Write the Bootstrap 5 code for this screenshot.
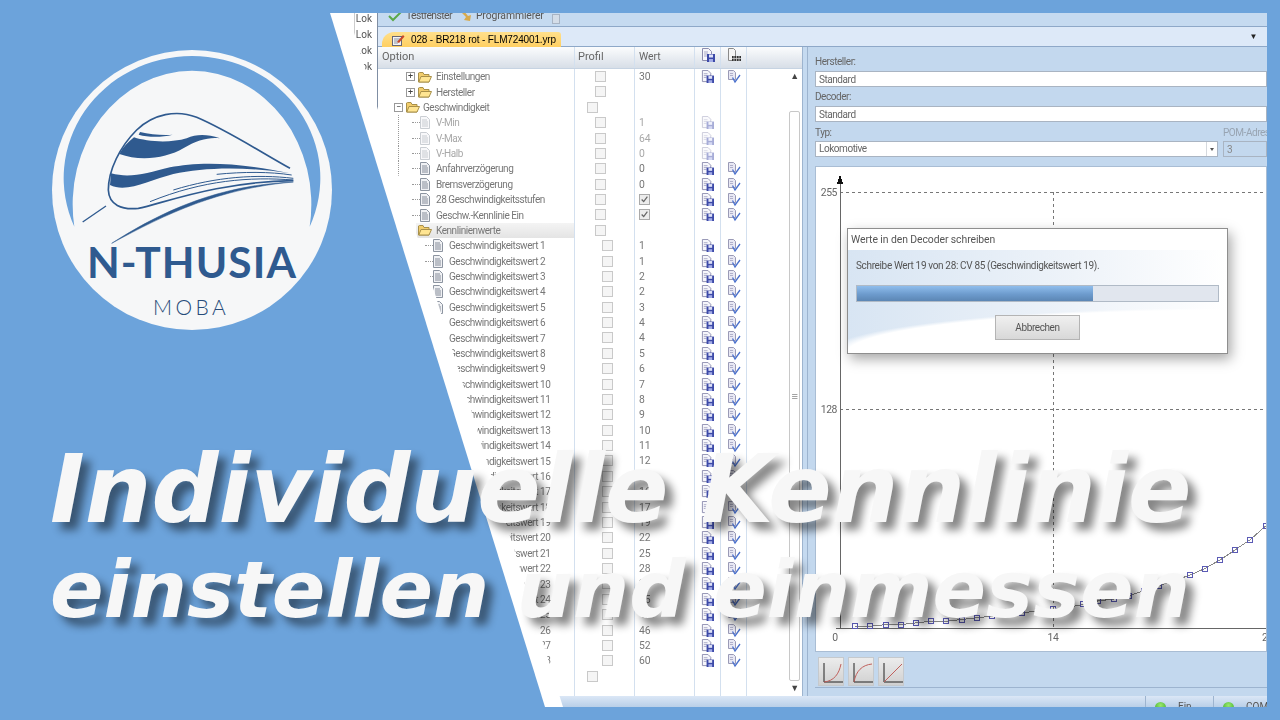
<!DOCTYPE html>
<html lang="de">
<head>
  <meta charset="UTF-8">
  <title>Individuelle Kennlinie einstellen und einmessen</title>
  <link href="https://cdn.jsdelivr.net/npm/bootstrap@5.3.0/dist/css/bootstrap.min.css" rel="stylesheet">
  <style>
    html, body { height: 100%; }
    body { background: #6ca3db; overflow: hidden; font-family: "Roboto", "Liberation Sans", sans-serif; }

    /* the thumbnail is a free canvas: shot, logo and title are laid over each other */
    .shot {
      left: 330px; top: 13px; width: 937px; height: 694px;
      clip-path: polygon(0 0, 100% 0, 100% 100%, 215px 100%);
      background: #fff; color: #777; font-size: 10px; line-height: 15px; letter-spacing: -.45px;
      filter: blur(.35px); overflow: hidden;
    }
    /* white band beside the blue wedge, it hides the start of the tree rows */
    .shot-fade { inset: 0; background: #fff; clip-path: polygon(0 0, 18px 0, 233px 100%, 0 100%); }
    .logo { left: 30px; top: 30px; width: 320px; height: 320px; }
    .logo-main { font: 700 42.5px "Lato", sans-serif; fill: #2f5a8f; letter-spacing: 1.1px; }
    .logo-sub { font: 300 21px "Lato", sans-serif; fill: #274b78; letter-spacing: 3.4px; }
    .headline {
      left: 50px; top: 440px; color: #f7f7f7; white-space: nowrap; font-family: "DejaVu Sans", sans-serif;
      font-style: italic; font-weight: 700;
      text-shadow: 8px 8px 8px rgba(0, 0, 0, .48);
    }
    .headline-a { font-size: 93.6px; line-height: 100px; height: 100px; }
    .headline-b { font-size: 79px; line-height: 100px; height: 100px; }

    .lok-col { width: 48px; border-right: 1px solid #7f8ea3; text-align: right; padding-right: 5px; color: #555; letter-spacing: 0; }
    .lok-col div { height: 16px; line-height: 12px; border-left: 1px solid #ccc; margin-left: 24px; }

    .tool-bar { height: 14px; background: #c5daf0; border-bottom: 1px solid #8ea8c8; color: #555; padding-left: 10px; font-size: 10.4px; letter-spacing: -.12px; }
    .tool-bar > div { margin-top: -8px; }
    .tool-tight { letter-spacing: -.6px; }
    .tool-more { width: 8px; height: 10px; background: #d4dde8; border: 1px solid #a8b4c4; margin-top: 1px !important; }
    .tab-strip { height: 20px; background: #dde9f8; border-bottom: 1px solid #8ea8c8; padding-left: 4px; }
    .tab-strip .nav-link {
      height: 15px; margin: 5px 0 0; padding: 0 5px 0 10px; border: 0; border-radius: 12px 3px 0 0; gap: 6px;
      background: linear-gradient(#ffe08c, #ffcf62); color: #333; font: 10px/15px "Liberation Sans", sans-serif; letter-spacing: -.15px;
    }
    .tab-menu { margin: 5px 10px 0 auto; font-size: 8px; color: #222; line-height: 10px; }

    .grid-head { height: 22px; background: linear-gradient(#fbfcfd, #d7dee7); border-bottom: 1px solid #c6d3e2; color: #666; line-height: 20px; font-size: 11px; letter-spacing: 0; }
    .cell-name { width: 197px; flex: none; border-right: 1px solid #d3e0ef; padding-left: 4px; }
    .cell-prof { width: 60px; flex: none; border-right: 1px solid #d3e0ef; padding-left: 3px; }
    .cell-val { width: 60px; flex: none; border-right: 1px solid #d3e0ef; padding-left: 4px; font-size: 10.4px; letter-spacing: 0; }
    .cell-ic { width: 26px; flex: none; border-right: 1px solid #d3e0ef; padding-left: 6px; }
    .cell-ic svg { display: block; margin-top: 1px; }
    .grid-row { height: 15.38px; }
    .grid-row > div { height: 15.38px; line-height: 15px; }
    .grid-row .cell-name { display: flex; align-items: center; white-space: nowrap; padding-left: 0; }
    .dim { color: #a8a8a8; }
    .dim svg { opacity: .45; }
    .tree-line { background: repeating-linear-gradient(#999 0 1px, transparent 1px 2px) no-repeat 20px 0 / 1px 100%; }
    .hilite { background: linear-gradient(#f4f4f4, #e4e4e4); height: 15px; padding-left: 2px; margin-left: 38px; width: 158px; display: flex; align-items: center; }
    .stub { width: 8px; border-top: 1px dotted #999; flex: none; }
    .exp { width: 9px; height: 9px; border: 1px solid #999; background: #fff; color: #444; font-size: 9px; line-height: 6px; text-align: center; flex: none; letter-spacing: 0; }
    .cb.form-check-input {
      display: block; width: 11px; height: 11px; margin: 2px 0 0; border: 1px solid #c9c9c9; border-radius: 0;
      background-color: #f5f5f5; opacity: 1; float: none;
    }
    .cb.form-check-input:checked {
      background-color: #ececec; border-color: #aaa;
      background-image: url("data:image/svg+xml,%3Csvg xmlns='http://www.w3.org/2000/svg' viewBox='0 0 11 11'%3E%3Cpath d='M2 5.500 4.500 8 9 2' fill='none' stroke='%23666' stroke-width='1.500'/%3E%3C/svg%3E");
      background-size: 100%;
    }
    .scroll-col { width: 15px; flex: none; padding: 0 2px; position: relative; }
    .scroll-arrow { height: 15px; font-size: 9px; line-height: 15px; text-align: center; color: #444; }
    .scroll-thumb { margin-top: 27px; height: 570px; border: 1px solid #c8c8c8; border-radius: 2px; color: #888; font-size: 11px; }
    .split-bar { width: 6px; flex: none; background: #c5daf0; border-left: 1px solid #9db4cf; border-right: 1px solid #9db4cf; }

    .panel-right { background: #c3d8ee; padding: 9px 0 0 7px; height: 649px; color: #666; }
    .fld-label { height: 12px; line-height: 12px; margin: 0 0 3px; display: block; white-space: nowrap; }
    .fld-box.form-control, .fld-box.form-select {
      height: 16px; min-height: 0; padding: 0 3px; border: 1px solid #a9b4c2; border-radius: 0;
      font-size: 10px; line-height: 14px; letter-spacing: inherit; color: #666; background-color: #fff;
    }
    .fld-box.form-select {
      background-position: right 0 center; background-size: 11px 14px;
      background-image: url("data:image/svg+xml,%3Csvg xmlns='http://www.w3.org/2000/svg' viewBox='0 0 11 14'%3E%3Cpath d='M.5 0v14' stroke='%23d5d9de'/%3E%3Cpath d='M4 6h4L6 9z' fill='%23555'/%3E%3C/svg%3E");
    }
    .typ-row { margin-top: 5px; gap: 5px; }
    .typ-label { margin-bottom: 2px; }
    .pom-col { width: 44px; flex: none; }
    .pom-box.form-control { background: #c3d8ee; color: #888; }
    .pom-label { color: #98a4b2; }
    .chart-box { height: 486px; background: #fff; border: 1px solid #a9bdd4; position: relative; margin-top: 9px; overflow: hidden; }
    .chart-box svg { display: block; }
    .chart-txt { font: 10.4px "Roboto", sans-serif; fill: #666; }
    .btn-bar { height: 36px; border-bottom: 1px solid #9db4cf; padding: 5px 0 0 3px; }
    .crv-btn { width: 26px; height: 29px; padding: 0; border: 1px solid #c5c9cd; border-radius: 0; background: linear-gradient(#ececec, #d0d0d0); }
    .crv-btn svg { display: block; margin: 3px 0 0 1px; }

    .dlg { left: 31px; top: 61px; width: 381px; height: 126px; background: #fff; border: 1px solid #8e8e8e; box-shadow: 3px 5px 12px rgba(0, 0, 0, .35); color: #555; letter-spacing: -.35px; }
    .dlg-title { height: 21px; line-height: 21px; padding-left: 3px; font-size: 10.4px; letter-spacing: -.08px; }
    .dlg-body {
      height: 103px; padding: 8px 8px 0;
      background: radial-gradient(ellipse 400px 45px at 100% 100%, #fff 95%, transparent 100%), linear-gradient(to right, #d8e5f3, #eef3f9 60%, #fff);
    }
    .dlg-bar.progress { height: 17px; margin: 12px 0 13px; border-radius: 0; background: #e1e6ee; border: 1px solid #b0bac6; }
    .dlg-bar .progress-bar { background: linear-gradient(#8fbdec, #6d9bcd 55%, #5c86b4); }
    .dlg-btn.btn { display: block; width: 85px; height: 25px; margin: 0 auto; padding: 0; border: 1px solid #b4b4b4; border-radius: 0; background: linear-gradient(#f0f0f0, #d8d8d8); font-size: 10px; letter-spacing: -.4px; color: #555; }

    .status-bar { height: 11px; background: linear-gradient(#dbe7f6, #b9cfe8); color: #555; line-height: 22px; overflow: hidden; letter-spacing: 0; }
    .status-wrap { margin-right: -14px; }
    .led { width: 11px; height: 11px; border-radius: 50%; background: radial-gradient(circle at 50% 30%, #9be86f, #27a31b); margin-top: 6px; }
    .status-item { border-left: 1px solid #9db4cf; height: 11px; padding-left: 9px; gap: 12px; width: 68px; }
  </style>
</head>
<body>
  <svg width="0" height="0" class="position-absolute">
    <symbol id="ic-save" viewBox="0 0 14 14">
      <path d="M1.500 .5h6l3 3v9h-9z" fill="#f6f6fb" stroke="#8d8dae"/>
      <path d="M3 4h4M3 6h4M3 8h3" stroke="#a9a9c6"/>
      <rect x="6" y="6" width="8" height="8" fill="#3d4aa8"/>
      <rect x="8" y="6.500" width="4" height="3" fill="#dfe2f7"/>
      <rect x="8" y="11" width="4" height="3" fill="#a3acE6"/>
    </symbol>
    <symbol id="ic-check" viewBox="0 0 14 14">
      <path d="M1.500 .5h5l2 2v7h-7z" fill="#e8e8f4" stroke="#9a9ab6"/>
      <path d="M3 3.500h3M3 5.500h3" stroke="#b0b0ca"/>
      <path d="M5.500 7.500 8 12 13 5" fill="none" stroke="#4a70cc" stroke-width="1.300"/>
    </symbol>
    <symbol id="ic-grid" viewBox="0 0 14 14">
      <path d="M1.500 .5h5l2 2v10h-7z" fill="#f4f4f4" stroke="#8a8a8a"/>
      <path d="M5 8h9v5H5z" fill="#333"/>
      <path d="M7 8v5M9.500 8v5M12 8v5M5 10.500h9" stroke="#ddd" stroke-width=".7"/>
    </symbol>
    <symbol id="ic-doc" viewBox="0 0 10 13">
      <path d="M.5 .5h6l3 3v9h-9z" fill="#f0f1f4" stroke="#8c94a0"/>
      <path d="M2 4h5M2 6h6M2 8h6M2 10h6" stroke="#858c99"/>
    </symbol>
    <symbol id="ic-folder" viewBox="0 0 14 12">
      <path d="M.5 2V11h10.500V3.500H6L5 1.500H1.500z" fill="#f2cd6c" stroke="#a8904a"/>
      <path d="M.8 11 3 5.500h10.500L11 11z" fill="#ffe592" stroke="#a8904a"/>
    </symbol>
  </svg>

  <!-- window screenshot, cut diagonally on the left -->
  <div class="shot position-absolute d-flex flex-column">
    <div class="d-flex flex-fill overflow-hidden">
      <div class="lok-col flex-shrink-0">
        <div>Lok</div><div>Lok</div><div>Lok</div><div>Lok</div>
      </div>
      <div class="d-flex flex-column flex-fill overflow-hidden">
        <div class="tool-bar d-flex flex-shrink-0">
          <div class="d-flex align-items-center tool-tight">
            <svg width="14" height="12" viewBox="0 0 14 12" class="me-1"><path d="M1 6 5 10 13 2" fill="none" stroke="#5aa84a" stroke-width="2"/></svg>Testfenster
          </div>
          <div class="d-flex align-items-center ms-2">
            <svg width="12" height="12" viewBox="0 0 12 12" class="me-1"><path d="M1 2 6 7 4 10 10 11 11 5 8 6 4 1z" fill="#d8aa4c"/></svg>Programmierer
          </div>
          <div class="tool-more ms-2"></div>
        </div>
        <div class="tab-strip d-flex flex-shrink-0">
          <ul class="nav nav-tabs border-0">
            <li class="nav-item">
              <a class="nav-link active d-flex align-items-center" href="#">
                <svg width="13" height="12" viewBox="0 0 13 12"><rect x=".5" y="2.500" width="9" height="9" fill="#f4f4f4" stroke="#667"/><path d="M2 5h6M2 7h6M2 9h4" stroke="#8a93a3"/><path d="M5 8 11 1l1.500 1.500L7 9z" fill="#c9482c"/></svg>028 - BR218 rot - FLM724001.yrp
              </a>
            </li>
          </ul>
          <div class="tab-menu">&#9660;</div>
        </div>
        <div class="d-flex flex-fill overflow-hidden">
          <div class="d-flex flex-column flex-shrink-0" style="width:424px">
            <div class="grid-head d-flex flex-shrink-0">
              <div class="cell-name">Option</div>
              <div class="cell-prof">Profil</div>
              <div class="cell-val">Wert</div>
              <div class="cell-ic"><svg width="14" height="14"><use href="#ic-save"/></svg></div>
              <div class="cell-ic"><svg width="14" height="14"><use href="#ic-grid"/></svg></div>
            </div>
            <div class="d-flex flex-fill overflow-hidden">
              <div class="flex-fill d-flex flex-column" id="gridRows"></div>
              <div class="scroll-col">
                <div class="scroll-arrow">&#9650;</div>
                <div class="scroll-thumb d-flex align-items-center justify-content-center">&#8801;</div>
                <div class="scroll-arrow">&#9660;</div>
              </div>
            </div>
          </div>
          <div class="split-bar"></div>
          <div class="panel-right flex-fill overflow-hidden">
            <label class="fld-label">Hersteller:</label>
            <input class="form-control fld-box" value="Standard">
            <label class="fld-label mt-1">Decoder:</label>
            <input class="form-control fld-box" value="Standard">
            <div class="d-flex typ-row">
              <div class="flex-fill">
                <label class="fld-label typ-label">Typ:</label>
                <select class="form-select fld-box"><option>Lokomotive</option></select>
              </div>
              <div class="pom-col">
                <label class="fld-label typ-label pom-label">POM-Adresse:</label>
                <input class="form-control fld-box pom-box" value="3" disabled>
              </div>
            </div>
            <div class="chart-box">
              <svg width="452" height="486" id="chartSvg" shape-rendering="crispEdges"></svg>
              <div class="dlg position-absolute">
                <div class="dlg-title">Werte in den Decoder schreiben</div>
                <div class="dlg-body">
                  <div>Schreibe Wert 19 von 28: CV 85 (Geschwindigkeitswert 19).</div>
                  <div class="progress dlg-bar"><div class="progress-bar" style="width:65.400%"></div></div>
                  <button class="btn dlg-btn">Abbrechen</button>
                </div>
              </div>
            </div>
            <div class="btn-bar d-flex gap-1">
              <button class="btn crv-btn"><svg width="24" height="23" viewBox="0 0 24 23"><path d="M4 1v19h19" fill="none" stroke="#222"/><path d="M4 20C14 19 19 12 21 2" fill="none" stroke="#c0605c"/></svg></button>
              <button class="btn crv-btn"><svg width="24" height="23" viewBox="0 0 24 23"><path d="M4 1v19h19" fill="none" stroke="#222"/><path d="M4 20C6 9 12 3 22 2" fill="none" stroke="#c0605c"/></svg></button>
              <button class="btn crv-btn"><svg width="24" height="23" viewBox="0 0 24 23"><path d="M4 1v19h19" fill="none" stroke="#222"/><path d="M4 20 22 2" fill="none" stroke="#c0605c"/></svg></button>
            </div>
          </div>
        </div>
      </div>
    </div>
    <div class="status-bar d-flex justify-content-end flex-shrink-0">
      <div class="status-wrap d-flex">
        <div class="status-item d-flex"><span class="led"></span><span>Ein</span></div>
        <div class="status-item d-flex"><span class="led"></span><span>COM</span></div>
      </div>
    </div>
    <div class="shot-fade position-absolute"></div>
  </div>

  <!-- logo -->
  <svg class="logo position-absolute" viewBox="0 0 960 960">
    <circle cx="486" cy="480" r="420" fill="#f6f7f8"/>
    <path d="M133 590A385 366 0 1 1 839 590 358 401 0 1 0 133 590Z" fill="#6ca3db"/>
    <path d="M780 415C690 365 590 300 500 262 440 238 370 252 320 300 270 350 235 420 235 480 237 525 275 540 325 535 400 520 560 455 790 452" fill="none" stroke="#2f5a8f" stroke-width="5"/>
    <path d="M312 322C350 335 420 340 470 325 500 312 530 312 570 325 540 320 500 330 460 355 410 385 330 395 268 372 280 350 295 335 312 322Z" fill="#2f5a8f"/>
    <path d="M330 306C360 312 400 318 428 314 395 322 355 322 326 314Z" fill="#2f5a8f"/>
    <path d="M243 430C300 445 350 430 420 412 500 395 620 395 780 430 640 408 520 412 430 432 360 450 290 490 240 465Z" fill="#2f5a8f"/>
    <path d="M560 433C640 425 720 425 785 435M430 480C560 440 680 432 790 445M360 515C520 450 660 440 790 450" fill="none" stroke="#2f5a8f" stroke-width="3"/>
    <path d="M245 640C400 540 570 465 790 456 570 475 410 550 245 640Z" fill="#2f5a8f" stroke="#2f5a8f" stroke-width="1.500"/>
    <path d="M158 576 228 528" stroke="#2f5a8f" stroke-width="4"/>
    <text class="logo-main" transform="scale(3)" x="57" y="248">N-THUSIA</text>
    <text class="logo-sub" transform="scale(3)" x="123" y="285">MOBA</text>
  </svg>

  <div class="headline position-absolute">
    <div class="headline-a">Individuelle Kennlinie</div>
    <div class="headline-b">einstellen und einmessen</div>
  </div>

  <script>
    // tree rows: kind, text, value, profil checkbox offset
    var rows = [
      ["fold", "Einstellungen", "30", 20], ["fold", "Hersteller", "", 20],
      ["open", "Geschwindigkeit", "", 12],
      ["doc2", "V-Min", "1", 20, "dim"], ["doc2", "V-Max", "64", 20, "dim"], ["doc2", "V-Halb", "0", 20, "dim"],
      ["doc2", "Anfahrverzögerung", "0", 20], ["doc2", "Bremsverzögerung", "0", 20],
      ["doc2", "28 Geschwindigkeitsstufen", "x", 20], ["doc2", "Geschw.-Kennlinie Ein", "x", 20],
      ["high", "Kennlinienwerte", "", 20]
    ];
    var cvs = [1,1,2,2,3,4,4,5,6,7,8,9,10,11,12,14,16,17,19,22,25,28,31,35,40,46,52,60];
    cvs.forEach(function (v, i) {
      rows.push(["doc3", "Geschwindigkeitswert " + (i + 1), String(v), 27]);
    });
    rows.push(["none", "", "", 12]);

    function use(id, w, h) {
      return '<svg width="' + w + '" height="' + h + '" class="flex-shrink-0"><use href="#' + id + '"/></svg>';
    }

    var html = "";
    rows.forEach(function (r, i) {
      var kind = r[0], name = "";
      var lined = i >= 3 && i <= 6 ? " tree-line" : "";
      if (kind == "fold") name = '<span class="exp" style="margin-left:28px;margin-right:3px">+</span>' + use("ic-folder", 14, 12) + '<span class="ms-1">' + r[1] + '</span>';
      if (kind == "open") name = '<span class="exp" style="margin-left:16px;margin-right:3px">&minus;</span>' + use("ic-folder", 14, 12) + '<span style="margin-left:3px">' + r[1] + '</span>';
      if (kind == "doc2") name = '<span class="stub" style="margin-left:34px"></span>' + use("ic-doc", 10, 13) + '<span style="margin-left:6px">' + r[1] + '</span>';
      if (kind == "doc3") name = '<span class="stub" style="margin-left:47px"></span>' + use("ic-doc", 10, 13) + '<span style="margin-left:6px">' + r[1] + '</span>';
      if (kind == "high") name = '<div class="hilite">' + use("ic-folder", 14, 12) + '<span class="ms-1">' + r[1] + '</span></div>';

      var val = r[2] == "x" ? '<input type="checkbox" class="form-check-input cb" checked disabled>' : r[2];
      var hasIcons = r[2] != "";
      html += '<div class="grid-row d-flex flex-shrink-0 ' + (r[4] || "") + '">' +
        '<div class="cell-name' + lined + '">' + name + '</div>' +
        '<div class="cell-prof"><input type="checkbox" class="form-check-input cb" disabled style="margin-left:' + (r[3] - 3) + 'px"></div>' +
        '<div class="cell-val">' + val + '</div>' +
        '<div class="cell-ic">' + (hasIcons ? use("ic-save", 13, 13) : "") + '</div>' +
        '<div class="cell-ic">' + (hasIcons && r[4] != "dim" ? use("ic-check", 14, 14) : "") + '</div>' +
        '</div>';
    });
    // empty rest of the grid, keeps the column lines going
    html += '<div class="d-flex flex-fill"><div class="cell-name"></div><div class="cell-prof"></div><div class="cell-val"></div><div class="cell-ic"></div><div class="cell-ic"></div></div>';
    document.getElementById("gridRows").innerHTML = html;

    // chart, in page coordinates shifted to the box
    var line = "", dots = "";
    cvs.forEach(function (v, i) {
      var x = 840 + (i + 1) * 15.2, y = 628 - v * 1.7;
      line += (i ? "L" : "M") + x.toFixed(1) + " " + y.toFixed(1);
      dots += '<rect x="' + (x - 2.5).toFixed(1) + '" y="' + (y - 2.5).toFixed(1) + '" width="5" height="5" fill="none" stroke="#5b5bb5"/>';
    });
    document.getElementById("chartSvg").innerHTML =
      '<g transform="translate(-816 -167)">' +
      '<path d="M840 192.500H1270M840 409.500H1270M1053.500 192V628M1266.500 192V628" stroke="#777" stroke-dasharray="3 3" fill="none"/>' +
      '<path d="M840.500 180V628M836 628.500H1270" stroke="#666" fill="none"/>' +
      '<path d="M840 174 837 184H843Z" fill="#111"/>' +
      '<text class="chart-txt" x="837" y="196" text-anchor="end">255</text>' +
      '<text class="chart-txt" x="837" y="413" text-anchor="end">128</text>' +
      '<text class="chart-txt" x="835" y="641" text-anchor="middle">0</text>' +
      '<text class="chart-txt" x="1053" y="641" text-anchor="middle">14</text>' +
      '<text class="chart-txt" x="1262" y="641">28</text>' +
      '<path d="' + line + '" fill="none" stroke="#888"/>' + dots + '</g>';
  </script>
  <script src="https://cdn.jsdelivr.net/npm/bootstrap@5.3.0/dist/js/bootstrap.bundle.min.js"></script>
</body>
</html>
